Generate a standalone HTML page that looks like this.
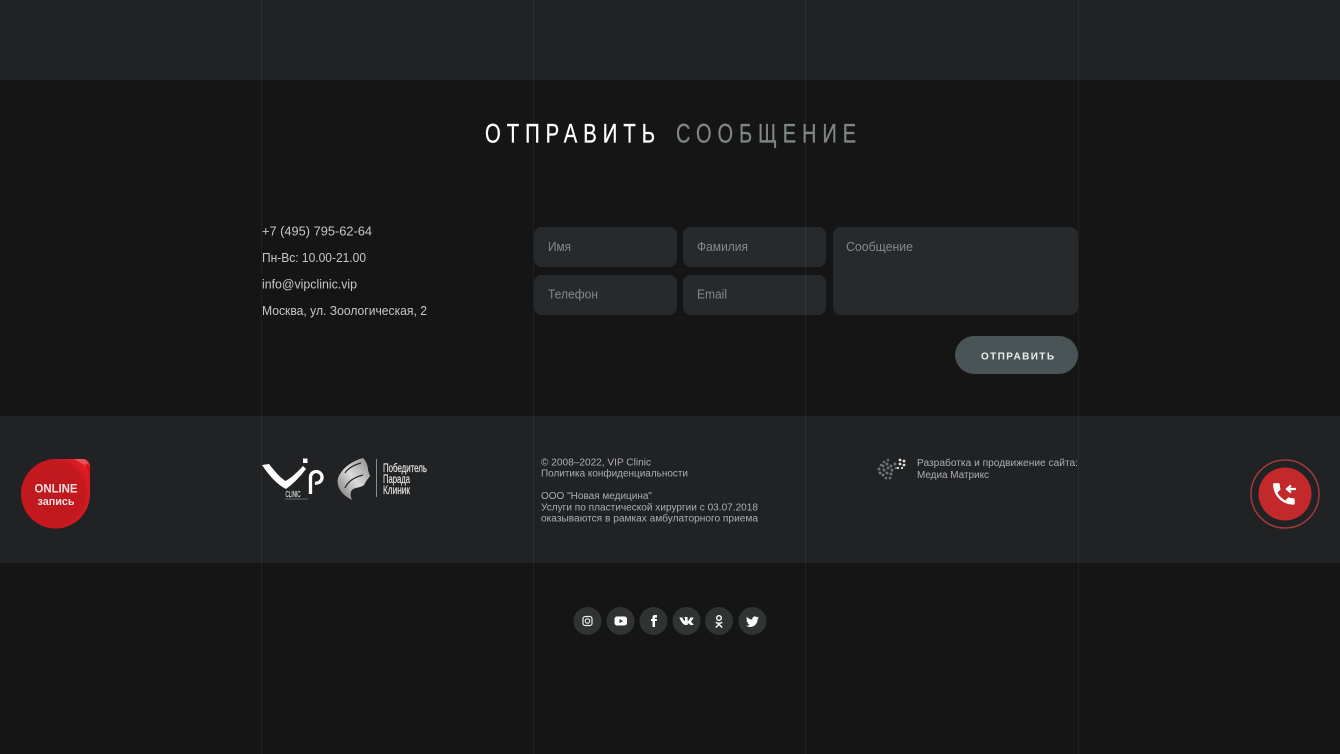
<!DOCTYPE html>
<html lang="ru"><head><meta charset="utf-8"><title>VIP Clinic</title>
<style>
html,body{margin:0;padding:0;width:1340px;height:754px;overflow:hidden;background:#151515}
svg{display:block}
text{font-family:"Liberation Sans",sans-serif;white-space:pre}
.t{font-size:12.5px;fill:#c6c7c7}
.p{font-size:12.5px;fill:#85888a}
.f{font-size:10px;fill:#adaeaf}
.n{font-family:"Liberation Sans Narrow","Liberation Sans",sans-serif}
</style></head><body>
<svg width="1340" height="754" viewBox="0 0 1340 754" xmlns="http://www.w3.org/2000/svg">
<defs>
<radialGradient id="rb" cx="45%" cy="50%" r="60%"><stop offset="0" stop-color="#ba1a20"/><stop offset=".78" stop-color="#c4181e"/><stop offset="1" stop-color="#e41e23"/></radialGradient>
<linearGradient id="face" x1="0" y1="1" x2="1" y2="0"><stop offset="0" stop-color="#6f6f6f"/><stop offset=".5" stop-color="#dcdcdc"/><stop offset="1" stop-color="#8a8a8a"/></linearGradient>
</defs>
<rect width="1340" height="754" fill="#151515"/>
<rect width="1340" height="80" fill="#202224"/>
<rect y="416" width="1340" height="147" fill="#202224"/>

<text class="n" x="485" y="142.500" font-size="27" letter-spacing="8" fill="#fff" stroke="#fff" stroke-width=".3" textLength="176" lengthAdjust="spacingAndGlyphs">ОТПРАВИТЬ</text>
<text class="n" x="676" y="142.500" font-size="27" letter-spacing="8" fill="#7f8687" stroke="#7f8687" stroke-width=".3" textLength="186" lengthAdjust="spacingAndGlyphs">СООБЩЕНИЕ</text>

<text class="t" x="262" y="235.500" textLength="110" lengthAdjust="spacingAndGlyphs">+7 (495) 795-62-64</text>
<text class="t" x="262" y="262" textLength="104" lengthAdjust="spacingAndGlyphs">Пн-Вс: 10.00-21.00</text>
<text class="t" x="262" y="288.500" textLength="95" lengthAdjust="spacingAndGlyphs">info@vipclinic.vip</text>
<text class="t" x="262" y="315" textLength="165" lengthAdjust="spacingAndGlyphs">Москва, ул. Зоологическая, 2</text>

<g fill="#272a2d">
<rect x="534" y="227" width="143" height="40" rx="8"/>
<rect x="683" y="227" width="143" height="40" rx="8"/>
<rect x="534" y="275" width="143" height="40" rx="8"/>
<rect x="683" y="275" width="143" height="40" rx="8"/>
<rect x="833" y="227" width="245" height="88" rx="8"/>
</g>
<text class="p" x="548" y="251" textLength="23" lengthAdjust="spacingAndGlyphs">Имя</text>
<text class="p" x="697" y="251" textLength="51" lengthAdjust="spacingAndGlyphs">Фамилия</text>
<text class="p" x="548" y="298.500" textLength="50" lengthAdjust="spacingAndGlyphs">Телефон</text>
<text class="p" x="697" y="298.500" textLength="30" lengthAdjust="spacingAndGlyphs">Email</text>
<text class="p" x="846" y="251" textLength="67" lengthAdjust="spacingAndGlyphs">Сообщение</text>

<rect x="955" y="336" width="123" height="38" rx="19" fill="#4a5355"/>
<text x="981" y="359.500" font-size="10" font-weight="700" fill="#eceded" textLength="73" lengthAdjust="spacing">ОТПРАВИТЬ</text>

<!-- online badge -->
<path d="M56 459H82Q90 459 90 467V494A34.500 34.500 0 1 1 21 494A35 35 0 0 1 56 459Z" fill="url(#rb)"/>
<path d="M74 459H83Q85 459 86 460L89 465Q88 466 87 467Q82 463 74 459Z" fill="#e65558"/>
<path d="M85 463 90 466V492Q90 474 85 463Z" fill="#d90f14"/>
<text x="34.500" y="492.500" font-size="11.500" font-weight="700" fill="#f2dede" textLength="43" lengthAdjust="spacingAndGlyphs">ONLINE</text>
<text x="37.500" y="505" font-size="11" font-weight="700" fill="#f2dede" textLength="37" lengthAdjust="spacingAndGlyphs">запись</text>

<!-- VIP logo -->
<path d="M262 465L269 464Q279 477 285.500 481Q293 477 303 466L306 469Q296 482 286 489Q274 483 262 465Z" fill="#fff"/>
<rect x="303" y="458.500" width="4.500" height="4.500" fill="#fff"/>
<path d="M310.500 494V476.500A5.800 5.800 0 1 1 315 483" fill="none" stroke="#fff" stroke-width="3.300"/>
<text class="n" x="285.500" y="497" font-size="8.500" fill="#ddd" stroke="#ddd" stroke-width=".2" textLength="15" lengthAdjust="spacingAndGlyphs">CLINIC</text>
<rect x="285" y="498.500" width="23" height="1" fill="#666"/>

<!-- face -->
<path d="M363 458C352 461 342 468 338 478C336 487 342 495 352 500C349 493 351 489 356 488C360 487 365 486 365 483L367 480 370 476 368 470C368 465 366 461 363 458Z" fill="url(#face)"/>
<path d="M361 463C354 465 348 468 345 473M363 475C355 477 348 481 345 488" fill="none" stroke="#2c2d2f" stroke-width="1.300"/>
<rect x="376" y="459" width="1" height="38" fill="#8b8c8d"/>
<text class="n" x="383" y="472" font-size="11.500" fill="#e8e8e8" stroke="#e8e8e8" stroke-width=".15" textLength="44" lengthAdjust="spacingAndGlyphs">Победитель</text>
<text class="n" x="383" y="483" font-size="11.500" fill="#e8e8e8" stroke="#e8e8e8" stroke-width=".15" textLength="27" lengthAdjust="spacingAndGlyphs">Парада</text>
<text class="n" x="383" y="494" font-size="11.500" fill="#e8e8e8" stroke="#e8e8e8" stroke-width=".15" textLength="27" lengthAdjust="spacingAndGlyphs">Клиник</text>

<text class="f" x="541" y="465.500" textLength="110" lengthAdjust="spacingAndGlyphs">© 2008–2022, VIP Clinic</text>
<text class="f" x="541" y="476.500" textLength="147" lengthAdjust="spacingAndGlyphs">Политика конфиденциальности</text>
<text class="f" x="541" y="499" textLength="111" lengthAdjust="spacingAndGlyphs">ООО "Новая медицина"</text>
<text class="f" x="541" y="510.500" textLength="217" lengthAdjust="spacingAndGlyphs">Услуги по пластической хирургии с 03.07.2018</text>
<text class="f" x="541" y="521.500" textLength="217" lengthAdjust="spacingAndGlyphs">оказываются в рамках амбулаторного приема</text>

<!-- matrix globe -->
<g fill="#707172">
<circle cx="881" cy="465" r="1.300"/><circle cx="884" cy="462" r="1.300"/><circle cx="888" cy="460" r="1.300"/><circle cx="879" cy="469" r="1.500"/><circle cx="883" cy="466" r="1.500"/><circle cx="887" cy="464" r="1.500"/><circle cx="891" cy="466" r="1.500"/><circle cx="895" cy="464" r="1.500"/><circle cx="880" cy="473" r="1.500"/><circle cx="884" cy="470" r="1.500"/><circle cx="888" cy="468" r="1.500"/><circle cx="892" cy="470" r="1.500"/><circle cx="896" cy="468" r="1.300"/><circle cx="883" cy="475" r="1.500"/><circle cx="887" cy="473" r="1.500"/><circle cx="891" cy="474" r="1.500"/><circle cx="886" cy="478" r="1.300"/><circle cx="890" cy="478" r="1.300"/>
</g>
<g fill="#e4e4e4"><circle cx="900" cy="460" r="1.400"/><circle cx="904" cy="461" r="1.400"/><circle cx="900" cy="464" r="1.400"/><circle cx="904" cy="465" r="1.400"/><circle cx="902" cy="468" r="1.100"/><circle cx="898" cy="468" r="1.100"/></g>
<text class="f" x="917" y="466" textLength="161" lengthAdjust="spacingAndGlyphs">Разработка и продвижение сайта:</text>
<text class="f" x="917" y="478" textLength="72" lengthAdjust="spacingAndGlyphs">Медиа Матрикс</text>

<!-- call -->
<circle cx="1285" cy="494" r="34" fill="none" stroke="#a33a3b" stroke-width="1.500"/>
<circle cx="1285" cy="494" r="26.500" fill="#c3282b"/>
<path transform="translate(1269.500 479.500) scale(1.200)" d="M6.600 10.800c1.400 2.800 3.800 5.100 6.600 6.600l2.200-2.200c.3-.3.700-.4 1-.2 1.100.4 2.300.6 3.600.6.600 0 1 .4 1 1V20c0 .6-.4 1-1 1C10.600 21 3 13.400 3 4c0-.6.400-1 1-1h3.500c.6 0 1 .4 1 1 0 1.200.2 2.400.6 3.600.1.300 0 .7-.2 1z" fill="#fff"/>
<path d="M1296 489H1287.500M1291 485.500 1287 489 1291 492.500" fill="none" stroke="#fff" stroke-width="2.200"/>

<!-- socials -->
<g fill="#303334">
<circle cx="587.500" cy="621" r="14"/><circle cx="620.500" cy="621" r="14"/><circle cx="653.500" cy="621" r="14"/><circle cx="686.500" cy="621" r="14"/><circle cx="719" cy="621" r="14"/><circle cx="752.500" cy="621" r="14"/>
</g>
<rect x="583" y="616.500" width="9" height="9" rx="2.300" fill="none" stroke="#eee" stroke-width="1.200"/>
<circle cx="587.500" cy="621" r="2.200" fill="none" stroke="#eee" stroke-width="1.100"/>
<rect x="614.500" y="616.500" width="12.500" height="9" rx="2.500" fill="#fff"/>
<path d="M619.500 619V623.200L623 621.100Z" fill="#303334"/>
<path transform="translate(648 615) scale(.5)" d="M9 8H6v4h3v12h5V12h3.642L18 8h-4V6.333C14 5.378 14.192 5 15.115 5H18V0h-3.808C10.596 0 9 1.583 9 4.615V8z" fill="#fff"/>
<path transform="translate(679.500 614) scale(.58)" d="M13.162 18.994c.609 0 .858-.406.851-.915-.031-1.917.714-2.949 2.059-1.604 1.488 1.488 1.796 2.519 3.603 2.519h3.200c.808 0 1.126-.26 1.126-.668 0-.863-1.421-2.386-2.625-3.504-1.686-1.565-1.765-1.602-.313-3.486 1.801-2.339 4.157-5.336 2.073-5.336h-3.981c-.772 0-.828.435-1.103 1.083-.995 2.347-2.886 5.387-3.604 4.922-.751-.485-.407-2.406-.35-5.261.015-.754.011-1.271-1.141-1.539-.629-.145-1.241-.205-1.809-.205-2.273 0-3.841.953-2.950 1.119 1.571.293 1.420 3.692 1.054 5.160-.638 2.556-3.036-2.024-4.035-4.305-.241-.548-.315-.974-1.175-.974h-3.255c-.492 0-.787.160-.787.516 0 .602 2.960 6.720 5.786 9.770 2.756 2.975 5.480 2.708 7.376 2.708z" fill="#fff"/>
<circle cx="719" cy="618" r="2.300" fill="none" stroke="#fff" stroke-width="1.400"/>
<path d="M715.700 622.300Q719 624.300 722.300 622.300M719 623.500V624.500M715.800 627.500 719 624.300 722.200 627.500" fill="none" stroke="#fff" stroke-width="1.400"/>
<path transform="translate(746 615.200) scale(.54)" d="M23.953 4.570a10 10 0 01-2.825.775 4.958 4.958 0 002.163-2.723c-.951.555-2.005.959-3.127 1.184a4.920 4.920 0 00-8.384 4.482C7.690 8.095 4.067 6.130 1.640 3.162a4.822 4.822 0 00-.666 2.475c0 1.710.870 3.213 2.188 4.096a4.904 4.904 0 01-2.228-.616v.060a4.923 4.923 0 003.946 4.827 4.996 4.996 0 01-2.212.085 4.936 4.936 0 004.604 3.417 9.867 9.867 0 01-6.102 2.105c-.390 0-.779-.023-1.170-.067a13.995 13.995 0 007.557 2.209c9.053 0 13.998-7.496 13.998-13.985 0-.210 0-.420-.015-.630A9.935 9.935 0 0024 4.590z" fill="#fff"/>

<!-- grid lines -->
<g fill="#fff" fill-opacity=".05">
<rect x="261" width="1" height="754"/><rect x="533" width="1" height="754"/><rect x="805" width="1" height="754"/><rect x="1078" width="1" height="754"/>
</g>
</svg>
</body></html>
